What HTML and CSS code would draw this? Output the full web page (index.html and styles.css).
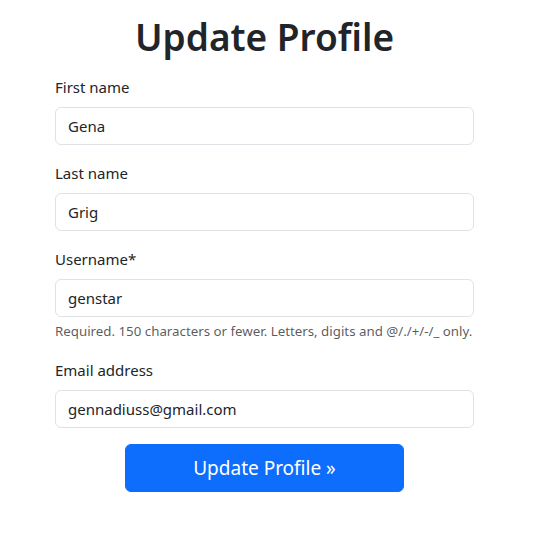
FILE: index.html
```html
<!DOCTYPE html>
<html lang="en">
<head>
<meta charset="utf-8">
<title>Update Profile</title>
<link rel="stylesheet" href="styles.css">
</head>
<body>
<main class="page">
  <h1 class="title">Update Profile</h1>
  <form class="form">
    <div class="field">
      <label class="label" for="first">First name</label>
      <input class="input" id="first" type="text" value="Gena">
    </div>
    <div class="field">
      <label class="label" for="last">Last name</label>
      <input class="input" id="last" type="text" value="Grig">
    </div>
    <div class="field">
      <label class="label" for="user">Username*</label>
      <input class="input" id="user" type="text" value="genstar">
      <div class="help">Required. 150 characters or fewer. Letters, digits and @/./+/-/_ only.</div>
    </div>
    <div class="field">
      <label class="label" for="email">Email address</label>
      <input class="input" id="email" type="email" value="gennadiuss@gmail.com">
    </div>
    <div class="actions">
      <button class="btn" type="button">Update Profile »</button>
    </div>
  </form>
</main>
</body>
</html>
```
FILE: styles.css
```css
* { box-sizing: border-box; }
html, body { margin: 0; padding: 0; background: #fff; }
body {
  font-family: "Noto Sans", "Open Sans", sans-serif;
  font-size: 16px;
  line-height: 1.5;
  color: #212529;
}
.page {
  width: 419px;
  margin-left: 55px;
  padding-top: 13px;
}
.title {
  margin: 0 0 14px;
  font-size: 37px;
  font-weight: 600;
  line-height: 48px;
  text-align: center;
}
.form { display: flex; flex-direction: column; }
.field { display: flex; flex-direction: column; margin-bottom: 16px; }
.label { margin-bottom: 8px; font-size: 15px; line-height: 24px; }
.input {
  display: block;
  width: 100%;
  height: 38px;
  padding: 6px 12px;
  font: inherit;
  font-size: 15px;
  color: #212529;
  background: #fff;
  border: 1px solid #dee2e6;
  border-radius: 6px;
  outline: none;
}
.help {
  margin-top: 4px;
  font-size: 13.3px;
  line-height: 21px;
  white-space: nowrap;
  color: rgba(33, 37, 41, 0.75);
}
.actions { display: flex; justify-content: center; }
.btn {
  width: 279px;
  height: 48px;
  padding: 8px 16px;
  font: inherit;
  font-size: 19px;
  line-height: 30px;
  color: #fff;
  background: #0d6efd;
  border: 1px solid #0d6efd;
  border-radius: 6px;
}
```
